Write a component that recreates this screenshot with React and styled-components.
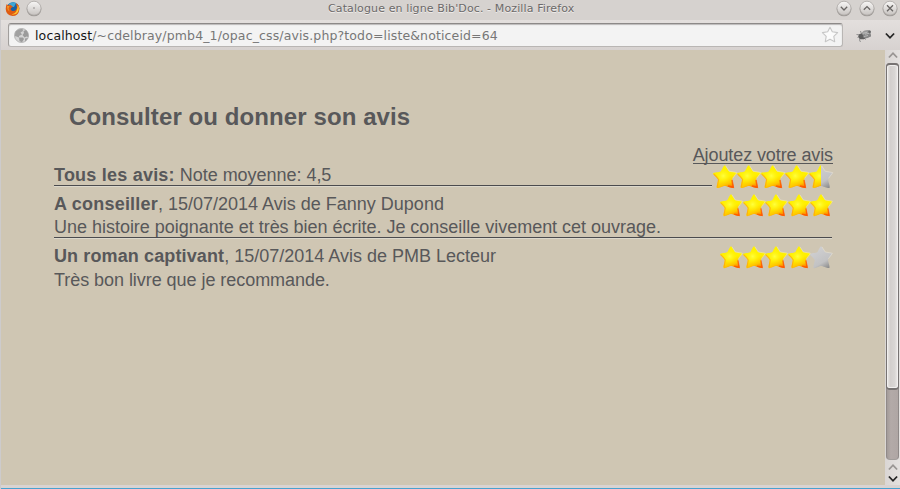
import React from "react";
import styled, { createGlobalStyle } from "styled-components";

const GlobalStyle = createGlobalStyle`
  * { box-sizing: border-box; }
  body { margin: 0; overflow: hidden; }
  svg { display: block; flex: none; }
`;

const Window = styled.div`
  width: 900px;
  height: 489px;
  display: flex;
  flex-direction: column;
  background: #d6d2d0;
  border-left: 1px solid #cdcbcc;
  font-family: "DejaVu Sans", sans-serif;
`;

const TitleBar = styled.header`
  height: 20px;
  flex: none;
  display: grid;
  grid-template-columns: 58px 1fr 69px;
  align-items: start;
  background: #d6d2cf;
`;

const TitleIcons = styled.div`
  display: flex;
  gap: 6px;
  padding-left: 4px;
`;

const WindowTitle = styled.div`
  padding-left: 269px;
  font-size: 11px;
  line-height: 17px;
  white-space: nowrap;
  color: #6c6969;
  text-shadow: 0 1px 0 #efedeb;
  letter-spacing: 0.115px;
`;

const WindowButtons = styled.div`
  display: flex;
  gap: 7px;
  margin-left: 4.5px;
`;

const Toolbar = styled.div`
  height: 30px;
  flex: none;
  display: flex;
  align-items: flex-start;
  padding: 3px 0 0 7px;
  background: linear-gradient(#e3dfdd, #d7d2d0);
`;

const AddressBar = styled.div`
  width: 835px;
  height: 24px;
  display: flex;
  align-items: center;
  padding: 0 3px 0 5px;
  border: 1px solid #b9b6b4;
  border-top: 1px solid #8c8988;
  border-left-color: #a19e9c;
  border-radius: 3px;
  background: #f3f3f3;
  box-shadow: inset 0 1px 1px #bbb9b8;
`;

const Url = styled.div`
  flex: 1;
  padding: 1px 0 0 6px;
  font-size: 12.5px;
  line-height: 20px;
  white-space: nowrap;
  color: #777;
  letter-spacing: 0.13px;
`;

const Host = styled.span`
  color: #151515;
`;

const ToolbarActions = styled.div`
  display: flex;
  align-items: center;
  height: 25px;
  gap: 12px;
  padding-left: 13px;
`;

const Body = styled.div`
  height: 435px;
  display: flex;
  flex: none;
`;

const Page = styled.main`
  width: 884px;
  padding: 53px 52px 0 53px;
  background: #cfc6b3;
  color: #58585a;
  font-family: "Liberation Sans", Arial, sans-serif;
  font-size: 18px;
`;

const Heading = styled.h1`
  height: 42px;
  margin: 0;
  padding-left: 15px;
  font-size: 24px;
  line-height: 28px;
  letter-spacing: 0.09px;
  white-space: nowrap;
`;

const AddReview = styled.div`
  height: 20px;
  display: flex;
  justify-content: flex-end;
  line-height: 20px;
`;

const AddLink = styled.a`
  height: 19px;
  border-bottom: 1px solid #58585a;
  letter-spacing: -0.1px;
  white-space: nowrap;
`;

const Title = styled.b`
  letter-spacing: ${(p) => p.$spacing}px;
`;

const Summary = styled.div`
  height: 24px;
  display: flex;
  align-items: flex-start;
`;

const SummaryText = styled.div`
  width: 658px;
  height: 21px;
  border-bottom: 1px solid #4b4b4e;
  box-shadow: 0 1px 0 #dcd8cc;
  line-height: 20px;
  letter-spacing: -0.03px;
  white-space: nowrap;
`;

const Review = styled.article`
  width: 778px;
  height: ${(p) => p.$height}px;
  padding-top: ${(p) => p.$top}px;
  border-bottom: 1px solid ${(p) => (p.$ruled ? "#4b4b4e" : "transparent")};
  box-shadow: ${(p) => (p.$ruled ? "0 1px 0 #dcd8cc" : "none")};
`;

const ReviewHeader = styled.div`
  height: 23px;
  display: flex;
  justify-content: space-between;
  line-height: 22px;
  white-space: nowrap;
`;

const Comment = styled.p`
  margin: 0;
  padding-top: ${(p) => p.$gap}px;
  line-height: 22px;
  letter-spacing: ${(p) => p.$spacing}px;
  white-space: nowrap;
`;

const Rating = styled.div`
  display: flex;
  margin: ${(p) => p.$margin};
`;

const ScrollBar = styled.aside`
  width: 15px;
  display: flex;
  flex-direction: column;
  align-items: center;
  background: linear-gradient(90deg, #dad6d4, #e4e1df);
`;

const ArrowCell = styled.div`
  height: 13px;
  flex: none;
  display: flex;
  align-items: center;
  justify-content: center;
  padding-bottom: ${(p) => p.$raise || 0}px;
`;

const Track = styled.div`
  width: 13px;
  height: 397px;
  flex: none;
  border: 1px solid #8f8988;
  border-top: 0;
  border-bottom-color: #a29d9b;
  border-radius: 4px;
  background: linear-gradient(90deg, #a39b99, #b3aaa8 35%, #afa6a4);
`;

const Thumb = styled.div`
  width: 13px;
  height: 327px;
  margin-left: -1px;
  border: 2px solid #777372;
  border-left-width: 1px;
  border-right-width: 1px;
  border-radius: 4px;
  background: linear-gradient(90deg, #eeecea, #d3cfcd 30%, #d9d6d4 70%, #efeceb);
  box-shadow: inset 0 0 0 1px #f1efee;
`;

const StatusEdge = styled.footer`
  height: 4px;
  flex: none;
  background: #d9d3d1;
  border-bottom: 1px solid #48a2cf;
`;

const STAR = "M11.4 .4 C12.6 -.1 14.8 5 16 6.3 C17.2 7 23.2 6.6 23.8 7.9 C24.2 9.2 19.4 12.6 19.2 14.4 C19 16 21.6 22 20.5 22.9 C19.4 23.7 13.5 20.9 11.8 20.9 C10.2 20.9 4.8 23.9 3.8 22.9 C2.9 22 5.2 16 5 14.6 C4.8 12.9 -.4 9.6 .1 8.3 C.6 7 6.4 7.4 7.7 6.4 C8.9 5.2 10.2 .8 11.4 .4Z";

function Star({ fill = 1, size = 24, width = 24 }) {
  const clip = `part-${fill * 10}-${size}`;
  return (
    <svg width={width} height={size} viewBox="0 0 24 24" preserveAspectRatio="none" overflow="visible">
      <defs>
        <linearGradient id="gold" x1=".25" y1="0" x2=".62" y2="1">
          <stop offset=".1" stopColor="#fff200" />
          <stop offset=".55" stopColor="#fff000" />
          <stop offset=".82" stopColor="#ffc800" />
          <stop offset="1" stopColor="#ff7a00" />
        </linearGradient>
        <linearGradient id="silver" x1=".2" y1="0" x2=".8" y2="1">
          <stop offset=".2" stopColor="#cdcdcf" />
          <stop offset=".7" stopColor="#c2c2c3" />
          <stop offset="1" stopColor="#8c8c8c" />
        </linearGradient>
        <radialGradient id="shine" cx=".43" cy=".46" r=".35">
          <stop stopColor="#ffff40" />
          <stop offset="1" stopColor="#ffed00" stopOpacity="0" />
        </radialGradient>
        <clipPath id={clip}>
          <rect width={24 * fill} height="24" />
        </clipPath>
      </defs>
      {fill < 1 && <path d={STAR} fill="url(#silver)" />}
      {fill > 0 && (
        <g clipPath={`url(#${clip})`}>
          <path d={STAR} fill="url(#gold)" />
          <path d={STAR} fill="url(#shine)" />
          <path d="M.7 9Q4 11.8 5.6 14.5L4.3 22" stroke="#ffa016" strokeWidth="1.1" fill="none" opacity=".75" />
          <path d="M19 15L20.3 22.3L15 21" stroke="#ff4a00" strokeWidth="1.5" fill="none" opacity=".7" />
        </g>
      )}
      <path d="M12.8 1L16.2 6.2L23.8 7.6L19.6 13.3" stroke="#f4ecda" strokeWidth=".7" fill="none" opacity=".65" />
    </svg>
  );
}

function Stars({ values, size, width, margin }) {
  return (
    <Rating $margin={margin}>
      {values.map((v, i) => <Star key={i} fill={v} size={size} width={width} />)}
    </Rating>
  );
}

function RoundButton({ children }) {
  return (
    <svg width="16" height="17" viewBox="0 0 16 17">
      <defs>
        <linearGradient id="knob" x2="0" y2="1">
          <stop stopColor="#f8f7f6" />
          <stop offset="1" stopColor="#c7c3c0" />
        </linearGradient>
      </defs>
      <circle cx="8" cy="8.9" r="7.4" fill="#8d8986" opacity=".75" />
      <circle cx="8" cy="8.2" r="7" fill="url(#knob)" stroke="#a6a29f" strokeWidth=".7" />
      <g stroke="#686563" strokeWidth="1.3" fill="none">{children}</g>
    </svg>
  );
}

function Firefox() {
  return (
    <svg width="15" height="17" viewBox="0 -1 15 17">
      <circle cx="8" cy="7.4" r="6.2" fill="#1861a4" />
      <path d="M4 3Q7 0 11 2L9 6L4 6Z" fill="#3da6d5" />
      <path d="M1.8 3L3.2 4.5Q5 3 6.3 4.4L8 5.7L6 7Q5 9 7.5 10Q11 10.5 12 6.5L10.8 2.2Q15 4 14.3 9Q13.3 15 7.5 15Q1 14 .7 8Q.7 5 1.8 3Z" fill="#df5b12" />
      <path d="M12.8 4Q14.8 7 13 11Q10.5 14.5 6.5 13.2Q12.5 13 12.8 4Z" fill="#ffc52e" />
      <path d="M2 5L4.5 5L3.5 7.5L4.5 10.5Q2 9 2 5Z" fill="#f29626" />
    </svg>
  );
}

function Globe() {
  return (
    <svg width="15" height="15" viewBox="0 0 15 15">
      <circle cx="7.5" cy="7.5" r="7" fill="#d4d4d4" stroke="#a9a9a9" strokeWidth=".8" />
      <path d="M1.5 3.5Q4 .8 8.5 .7L9 3L6.5 4.5L8 6.5L5 8L5 9.5L2.5 8.5L.8 8Z" fill="#a0a0a0" />
      <path d="M9.5 3L12 2Q14.8 5 14.3 9L12.5 8.5L10.5 9.5L8.5 7L10 5Z M5 9.5L9 9.5L10 11L8 14.2L5.5 13Z M11 10.5L14 10L11.2 13.5Z" fill="#9b9b9b" />
    </svg>
  );
}

function BookmarkStar() {
  return (
    <svg width="18" height="18" viewBox="0 0 18 18">
      <path d="M9 1.3L11.3 5.8L16.6 6.6L12.8 10.4L13.7 15.7L9 13.3L4.3 15.7L5.2 10.4L1.4 6.6L6.7 5.8Z" fill="#fbfbfb" stroke="#c6c6c6" strokeWidth="1.1" strokeLinejoin="round" />
    </svg>
  );
}

function Bug() {
  return (
    <svg width="17" height="15" viewBox="0 0 17 15">
      <path d="M.5 6.5L5 7L1.5 9.5M5 8L3.5 12L4.5 14M8 10L10 11.5M5.5 6L4.5 3M12 8.5L15 8" stroke="#888" strokeWidth=".9" fill="none" />
      <ellipse cx="6.2" cy="8.4" rx="3.8" ry="2.8" fill="#5e5e5e" />
      <ellipse cx="10.5" cy="4.9" rx="4.6" ry="2.7" fill="#999" transform="rotate(-12 10 5)" />
      <ellipse cx="11" cy="7.8" rx="4.2" ry="2.2" fill="#858585" transform="rotate(-14 11 8)" />
      <path d="M7 5.3L11 4.3M9 6.3L13 5.3M8 8.5L12 7.5" stroke="#c3c3c3" strokeWidth=".8" />
      <circle cx="13.5" cy="3.8" r="1.3" fill="#666" />
    </svg>
  );
}

function Chevron({ up, color = "#252525" }) {
  return (
    <svg width="10" height="8" viewBox="0 0 10 8">
      <path d={up ? "M.9 6.5L5 2.2L9.1 6.5" : "M.9 1.5L5 5.8L9.1 1.5"} fill="none" stroke={color} strokeWidth="1.8" />
    </svg>
  );
}

export default function App() {
  return (
    <>
      <GlobalStyle />
      <Window>
        <TitleBar>
          <TitleIcons>
            <Firefox />
            <RoundButton><circle cx="8" cy="8" r=".4" strokeWidth=".6" /></RoundButton>
          </TitleIcons>
          <WindowTitle>Catalogue en ligne Bib'Doc. - Mozilla Firefox</WindowTitle>
          <WindowButtons>
            <RoundButton><path d="M4.8 6.8L8 10L11.2 6.8" /></RoundButton>
            <RoundButton><path d="M4.8 9.8L8 6.6L11.2 9.8" /></RoundButton>
            <RoundButton><path d="M5 5.2L11 11.2M11 5.2L5 11.2" /></RoundButton>
          </WindowButtons>
        </TitleBar>
        <Toolbar>
          <AddressBar>
            <Globe />
            <Url><Host>localhost</Host>/~cdelbray/pmb4_1/opac_css/avis.php?todo=liste&amp;noticeid=64</Url>
            <BookmarkStar />
          </AddressBar>
          <ToolbarActions><Bug /><Chevron /></ToolbarActions>
        </Toolbar>
        <Body>
          <Page>
            <Heading>Consulter ou donner son avis</Heading>
            <AddReview><AddLink>Ajoutez votre avis</AddLink></AddReview>
            <Summary>
              <SummaryText><Title $spacing={0.22}>Tous les avis:</Title> Note moyenne: 4,5</SummaryText>
              <Stars values={[1, 1, 1, 1, 0.5]} size={24} width={24} margin="0 0 0 1px" />
            </Summary>
            <Review $height={49} $top={4} $ruled>
              <ReviewHeader>
                <span><Title $spacing={0.22}>A conseiller</Title>, 15/07/2014 Avis de Fanny Dupond</span>
                <Stars values={[1, 1, 1, 1, 1]} size={23} width={22.6} margin="1px -1px 0 0" />
              </ReviewHeader>
              <Comment $gap={0} $spacing={-0.018}>Une histoire poignante et très bien écrite. Je conseille vivement cet ouvrage.</Comment>
            </Review>
            <Review $height={54} $top={7}>
              <ReviewHeader>
                <span><Title $spacing={0.12}>Un roman captivant</Title>, 15/07/2014 Avis de PMB Lecteur</span>
                <Stars values={[1, 1, 1, 1, 0]} size={23} width={22.6} margin="1px -1px 0 0" />
              </ReviewHeader>
              <Comment $gap={1} $spacing={-0.05}>Très bon livre que je recommande.</Comment>
            </Review>
          </Page>
          <ScrollBar>
            <ArrowCell $raise={3}><Chevron up color="#999593" /></ArrowCell>
            <Track><Thumb /></Track>
            <ArrowCell><Chevron up color="#999593" /></ArrowCell>
            <ArrowCell $raise={1}><Chevron /></ArrowCell>
          </ScrollBar>
        </Body>
        <StatusEdge />
      </Window>
    </>
  );
}
